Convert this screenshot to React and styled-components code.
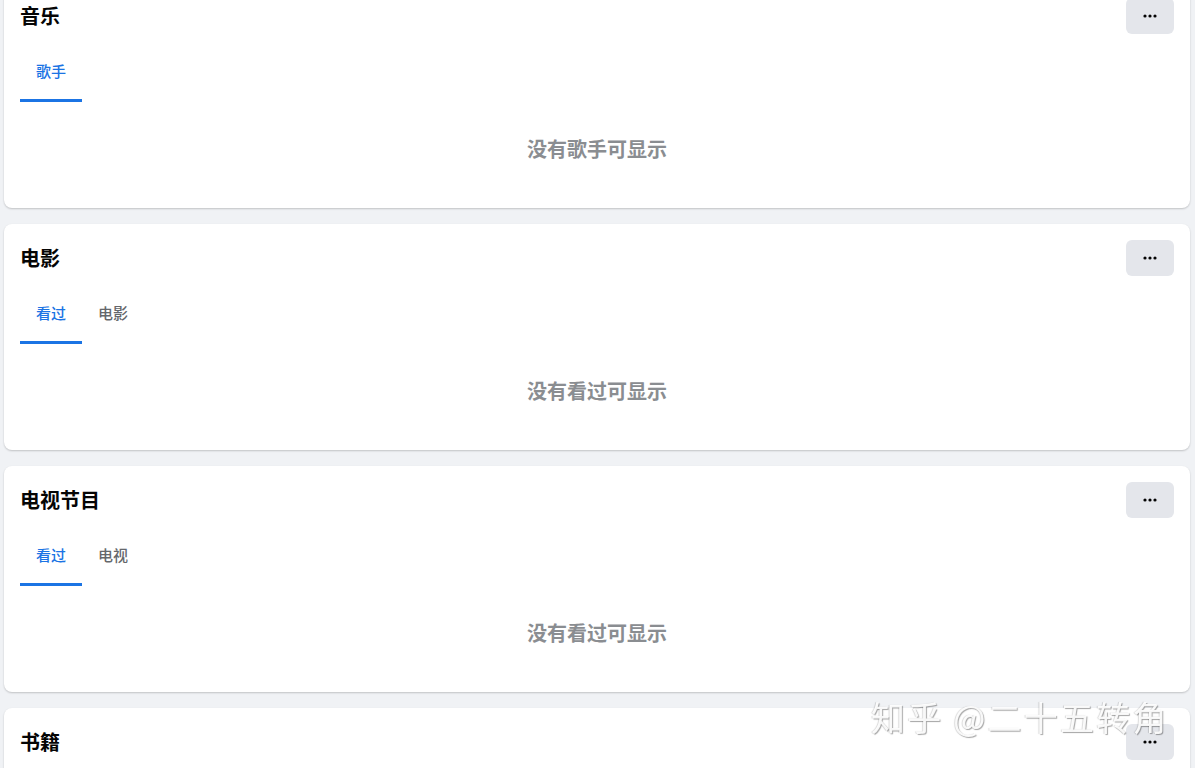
import React from "react";
import styled, { createGlobalStyle } from "styled-components";

const Global = createGlobalStyle`
  html, body { margin: 0; padding: 0; background: #f0f2f5; overflow: hidden; }
  body { font-family: "Noto Sans CJK SC", "Noto Sans", sans-serif; }
`;

const Page = styled.div`
  padding: 0 5px 0 4px;
  margin-top: -18px;
  display: flex;
  flex-direction: column;
  gap: 16px;
  height: 786px;
  overflow: hidden;
`;

const Card = styled.section`
  background: #fff;
  border-radius: 8px;
  box-shadow: 0 1px 2px rgba(0, 0, 0, 0.2);
  padding: 16px 16px 0;
  height: 226px;
  flex-shrink: 0;
  box-sizing: border-box;
`;

const Header = styled.div`
  display: flex;
  align-items: center;
  justify-content: space-between;
  height: 36px;
`;

const Title = styled.h2`
  margin: 0;
  font-size: 20px;
  font-weight: 700;
  color: #050505;
  line-height: 24px;
`;

const MoreButton = styled.button`
  width: 48px;
  height: 36px;
  border: none;
  border-radius: 6px;
  background: #e4e6eb;
  display: flex;
  align-items: center;
  justify-content: center;
  padding: 0;
`;

const Tabs = styled.div`
  display: flex;
  margin-top: 8px;
  height: 60px;
`;

const Tab = styled.div`
  position: relative;
  padding: 0 16px 4px;
  display: flex;
  align-items: center;
  font-size: 15px;
  font-weight: 500;
  color: ${(p) => (p.$active ? "#1b74e4" : "#65676b")};
  &::after {
    content: "";
    display: ${(p) => (p.$active ? "block" : "none")};
    position: absolute;
    left: 0;
    right: 0;
    bottom: 0;
    height: 3px;
    background: #1b74e4;
  }
`;

const Empty = styled.div`
  padding: 32px 0 44px;
  text-align: center;
  font-size: 20px;
  line-height: 30px;
  font-weight: 700;
  color: #8a8d91;
`;

const Watermark = styled.div`
  position: fixed;
  left: 871px;
  top: 692px;
  font-size: 34px;
  letter-spacing: 2.2px;
  color: rgba(255, 255, 255, 0.92);
  text-shadow: 1px 1px 1px rgba(0, 0, 0, 0.35), -1px 0 1px rgba(0, 0, 0, 0.15);
  font-family: "Noto Sans CJK SC", sans-serif;
  white-space: pre;
  pointer-events: none;
`;

const Dots = () => (
  <svg width="14" height="4" viewBox="0 0 14 4">
    <circle cx="2" cy="2" r="1.6" fill="#050505" />
    <circle cx="7" cy="2" r="1.6" fill="#050505" />
    <circle cx="12" cy="2" r="1.6" fill="#050505" />
  </svg>
);

const sections = [
  { title: "音乐", tabs: ["歌手"], empty: "没有歌手可显示" },
  { title: "电影", tabs: ["看过", "电影"], empty: "没有看过可显示" },
  { title: "电视节目", tabs: ["看过", "电视"], empty: "没有看过可显示" },
  { title: "书籍", tabs: ["读过", "书籍"], empty: "没有读过可显示" },
];

export default function App() {
  return (
    <>
      <Global />
      <Page>
        {sections.map((s) => (
          <Card key={s.title}>
            <Header>
              <Title>{s.title}</Title>
              <MoreButton aria-label="更多">
                <Dots />
              </MoreButton>
            </Header>
            <Tabs>
              {s.tabs.map((t, i) => (
                <Tab key={t} $active={i === 0}>
                  {t}
                </Tab>
              ))}
            </Tabs>
            <Empty>{s.empty}</Empty>
          </Card>
        ))}
      </Page>
      <Watermark>知乎 @二十五转角</Watermark>
    </>
  );
}
